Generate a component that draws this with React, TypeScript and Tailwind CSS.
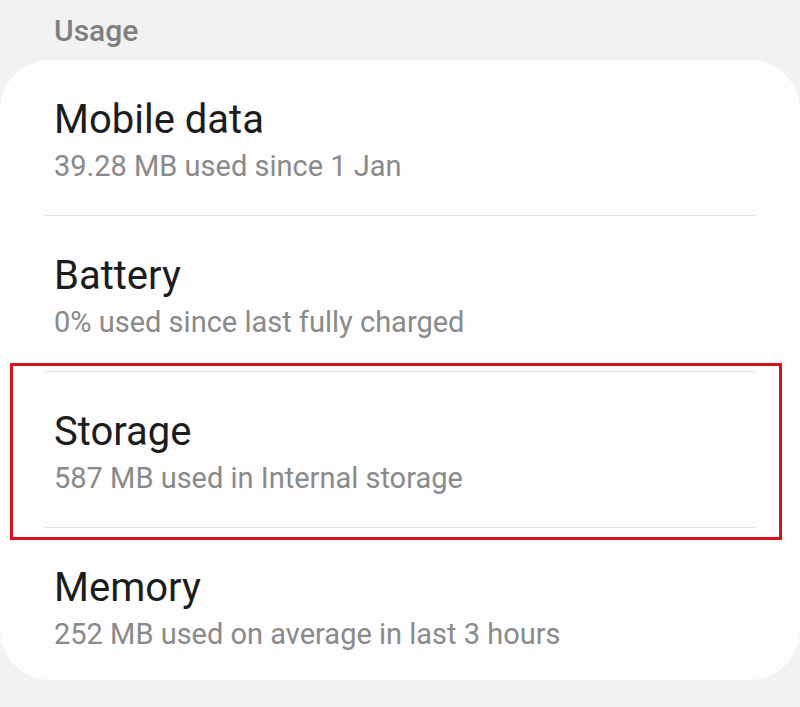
import React from 'react'

const ROWS = [
  { title: 'Mobile data', sub: '39.28 MB used since 1 Jan' },
  { title: 'Battery', sub: '0% used since last fully charged' },
  { title: 'Storage', sub: '587 MB used in Internal storage' },
  { title: 'Memory', sub: '252 MB used on average in last 3 hours' },
]

const Row: React.FC<{ title: string; sub: string; last?: boolean }> = ({ title, sub, last }) => (
  <div>
    <div className="pl-[54px] pt-[37px] pb-[29px]">
      <div className="text-[40px] leading-[46px] text-[#1c1c1c]">{title}</div>
      <div className="mt-[3px] text-[29px] leading-[40px] text-[#8a8a8a]">{sub}</div>
    </div>
    {!last && <div className="mx-[45px] h-px bg-[#e2e2e2]" />}
  </div>
)

export default function App() {
  return (
    <div
      className="relative w-[800px] h-[707px] overflow-hidden bg-[#f2f2f2]"
      style={{ fontFamily: 'Roboto, "Noto Sans", sans-serif' }}
    >
      <div className="h-[60px] flex items-center pl-[54px] text-[30px] font-medium text-[#808080]">
        Usage
      </div>
      <div className="bg-[#fdfdfd] rounded-[50px] h-[620px]">
        {ROWS.map((r, i) => (
          <Row key={r.title} title={r.title} sub={r.sub} last={i === ROWS.length - 1} />
        ))}
      </div>
      {/* highlight box */}
      <div className="absolute left-[10px] top-[363px] w-[772px] h-[177px] border-[3px] border-[#d3121b]" />
    </div>
  )
}
